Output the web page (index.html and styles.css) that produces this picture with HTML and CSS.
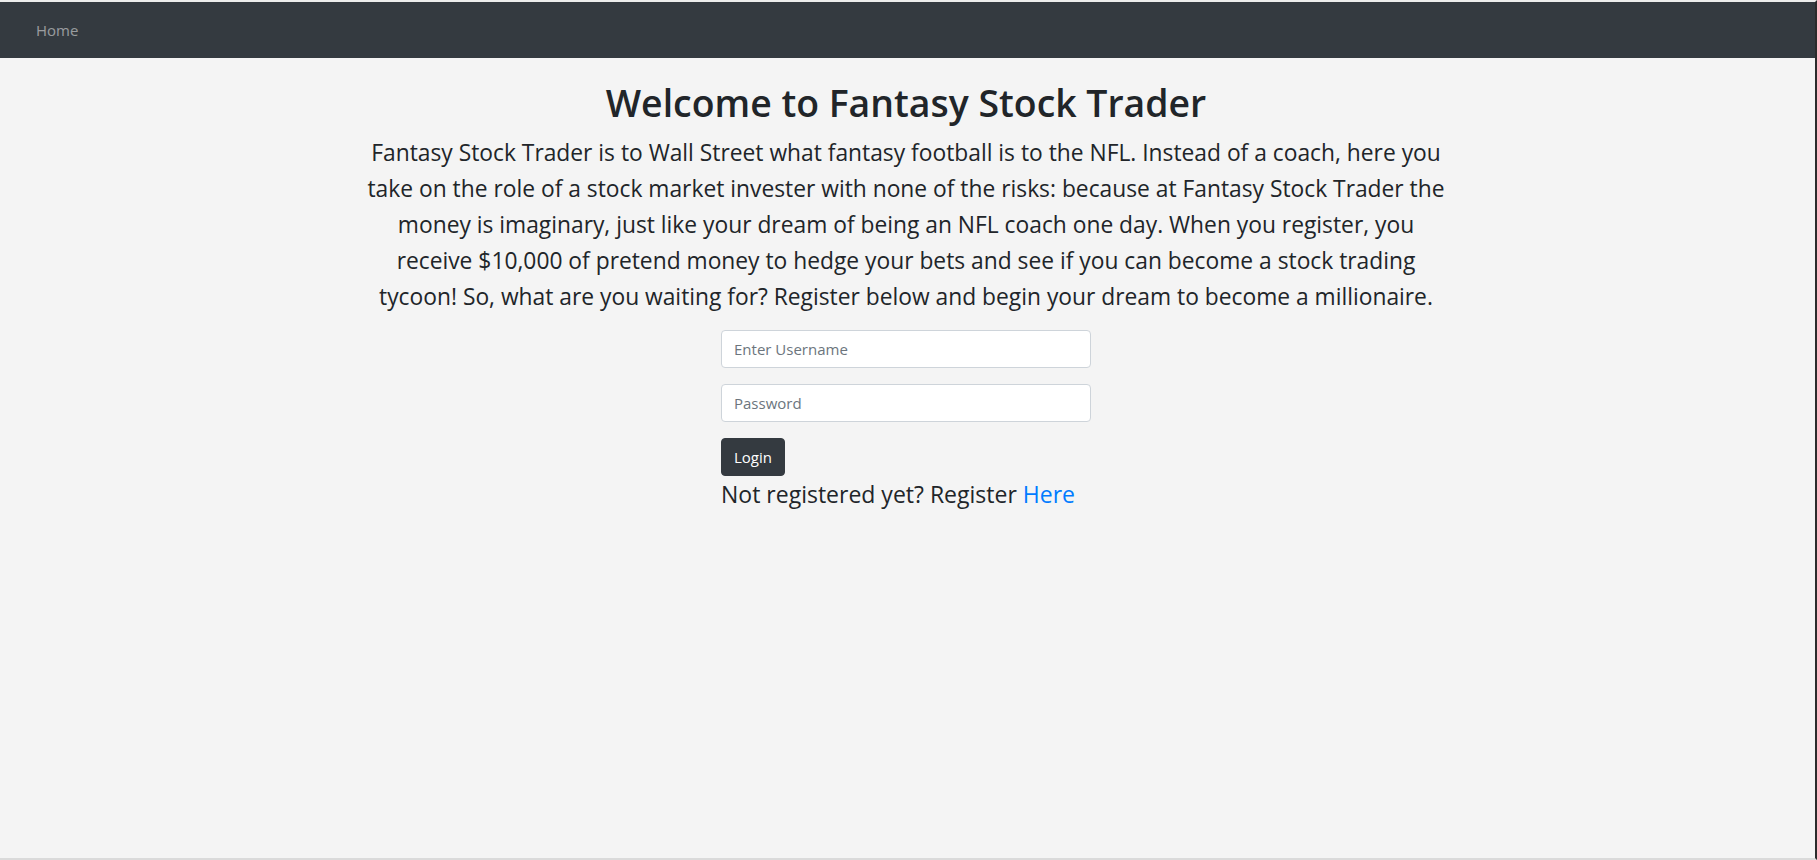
FILE: index.html
```html
<!DOCTYPE html>
<html lang="en">
<head>
<meta charset="utf-8">
<title>Fantasy Stock Trader</title>
<link rel="stylesheet" href="styles.css">
</head>
<body>
<div class="frame">
  <nav class="navbar">
    <a class="nav-link" href="#">Home</a>
  </nav>
  <main class="container">
    <h1 class="title">Welcome to Fantasy Stock Trader</h1>
    <p class="intro">Fantasy Stock Trader is to Wall Street what fantasy football is to the NFL. Instead of a coach, here you<br>take on the role of a stock market invester with none of the risks: because at Fantasy Stock Trader the<br>money is imaginary, just like your dream of being an NFL coach one day. When you register, you<br>receive $10,000 of pretend money to hedge your bets and see if you can become a stock trading<br>tycoon! So, what are you waiting for? Register below and begin your dream to become a millionaire.</p>
    <form class="login">
      <div class="form-group"><input class="form-control" type="text" placeholder="Enter Username"></div>
      <div class="form-group"><input class="form-control" type="password" placeholder="Password"></div>
      <button class="btn" type="button">Login</button>
      <p class="register">Not registered yet? Register <a href="#">Here</a></p>
    </form>
  </main>
</div>
</body>
</html>
```

FILE: styles.css
```css
html, body {
  margin: 0;
  padding: 0;
}
body {
  font-family: "Open Sans", "Noto Sans", sans-serif;
  color: #212529;
  background: #f4f4f4;
}
.frame {
  box-sizing: border-box;
  height: 100vh;
  border-top: 2px solid #ececec;
  border-bottom: 2px solid #dadada;
  border-right: 2px solid #2b2b2b;
  background: #f4f4f4;
}
.navbar {
  height: 56px;
  background: #343a40;
  display: flex;
  align-items: center;
  padding-left: 36px;
}
.nav-link {
  color: rgba(255, 255, 255, 0.5);
  text-decoration: none;
  font-size: 15px;
}
.container {
  max-width: 1110px;
  margin: 0 auto;
  padding: 0 18px 0 15px;
  display: flex;
  flex-direction: column;
  align-items: center;
}
.title {
  margin: 21px 0 8px;
  font-size: 37.4px;
  font-weight: 600;
  line-height: 48px;
  text-align: center;
}
.intro {
  margin: 0 0 15px;
  font-size: 22.8px;
  line-height: 36px;
  text-align: center;
}
.login {
  width: 370px;
  display: flex;
  flex-direction: column;
  align-items: flex-start;
}
.form-group {
  width: 100%;
  margin-bottom: 16px;
}
.form-control {
  box-sizing: border-box;
  width: 100%;
  height: 38px;
  padding: 6px 12px;
  font-family: inherit;
  font-size: 15px;
  color: #495057;
  background: #fff;
  border: 1px solid #ced4da;
  border-radius: 4px;
}
.form-control::placeholder {
  color: #6c757d;
}
.btn {
  height: 38px;
  padding: 6px 12px;
  font-family: inherit;
  font-size: 15px;
  color: #fff;
  background: #343a40;
  border: 1px solid #343a40;
  border-radius: 4px;
}
.register {
  margin: 0;
  font-size: 23px;
  line-height: 36px;
}
.register a {
  color: #007bff;
  text-decoration: none;
}
```
